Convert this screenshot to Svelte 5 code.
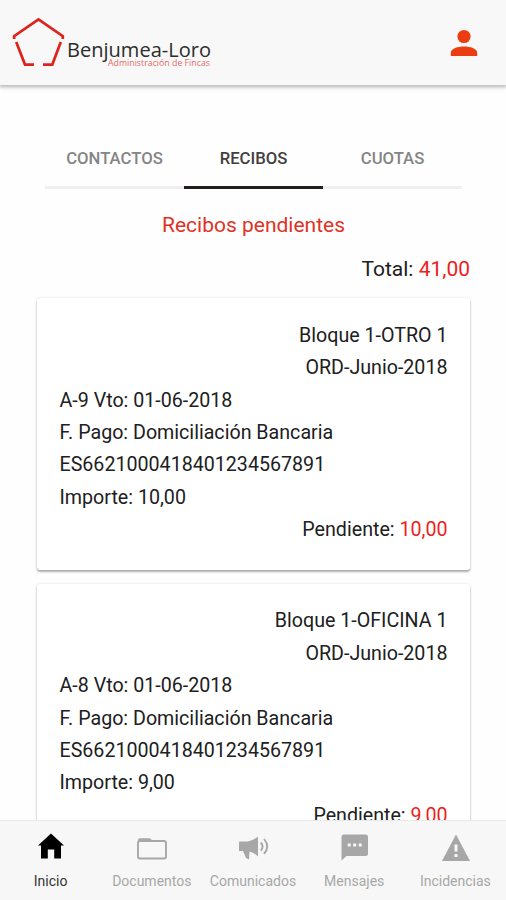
<script>
  const tabs = ['CONTACTOS', 'RECIBOS', 'CUOTAS'];
  const receipts = [
    { unit: 'Bloque 1-OTRO 1', period: 'ORD-Junio-2018', ref: 'A-9', due: '01-06-2018', amount: '10,00' },
    { unit: 'Bloque 1-OFICINA 1', period: 'ORD-Junio-2018', ref: 'A-8', due: '01-06-2018', amount: '9,00' }
  ];
  const nav = [
    { id: 'home', label: 'Inicio' },
    { id: 'folder', label: 'Documentos' },
    { id: 'horn', label: 'Comunicados' },
    { id: 'chat', label: 'Mensajes' },
    { id: 'warning', label: 'Incidencias' }
  ];
  let active = $state('RECIBOS');
</script>

<div class="app">
  <header>
    <svg class="logo" width="205" height="54" viewBox="10 16 205 54">
      <g fill="none" stroke="#e0221c" stroke-width="2.7">
        <path d="M14.1 39V36.2L38.5 19.5L62.8 36.2V39" />
        <path d="M16.2 42L25 64.6H34" />
        <path d="M60.8 42L52.3 64.6H43" />
      </g>
      <text class="brand" x="67" y="57" textLength="144" lengthAdjust="spacingAndGlyphs">Benjumea-Loro</text>
      <text class="sub" x="108" y="66.3" textLength="102" lengthAdjust="spacingAndGlyphs">Administración de Fincas</text>
    </svg>
    <svg class="user" width="28" height="28" viewBox="0 0 28 28" fill="#ec3c12">
      <circle cx="14" cy="7.5" r="6.6" />
      <path d="M.8 27v-3.4c0-4.2 7-6.2 13.2-6.2s13.2 2 13.2 6.2V27z" />
    </svg>
  </header>

  <main>
    <div class="tabs">
      {#each tabs as tab}
        <button class:active={active === tab} onclick={() => (active = tab)}>{tab}</button>
      {/each}
    </div>
    <h1>Recibos pendientes</h1>
    <p class="total">Total: <b>41,00</b></p>
    {#each receipts as r}
      <article>
        <p class="right">{r.unit}</p>
        <p class="right">{r.period}</p>
        <p>{r.ref} Vto: {r.due}</p>
        <p>F. Pago: Domiciliación Bancaria</p>
        <p>ES6621000418401234567891</p>
        <p>Importe: {r.amount}</p>
        <p class="right">Pendiente: <b>{r.amount}</b></p>
      </article>
    {/each}
  </main>

  <nav>
    {#each nav as item, i}
      <div class="item" class:current={i === 0}>
        <svg width="34" height="30" viewBox="0 0 34 30" fill="currentColor">
          {#if item.id === 'home'}
            <path d="M17 2.5L30 14.4H27V27.5H20.2V18.5H13.8V27.5H7V14.4H4z" />
          {:else if item.id === 'folder'}
            <path d="M3 11V9.2q0-2 2-2h9q1.5 0 2.3 1.3L17.500 11z" />
            <rect x="3" y="10" width="28" height="17.5" rx="2" fill="none" stroke="currentColor" stroke-width="1.9" />
          {:else if item.id === 'horn'}
            <path d="M22 5.500V25.500Q18 21.500 13.500 20.500L13 28.500L10 27L7 20H3V11.500Q3 10.500 4 10.500H12Q17.500 9.500 22 5.500z" />
            <path d="M24.800 11.500Q28.300 15.500 24.800 19.500M28 8Q34.500 15.500 28 22.800" fill="none" stroke="currentColor" stroke-width="1.900" />
          {:else if item.id === 'chat'}
            <path d="M6.5 3.5H28.5Q31 3.5 31 6V22.500Q31 25 28.500 25H9.500L4.500 29.500V6Q4.500 3.500 6.500 3.500z" />
            <path d="M10.700 12.500h3v3h-3zM16.200 12.500h3v3h-3zM21.700 12.500h3v3h-3z" fill="#f7f7f7" />
          {:else}
            <path d="M18 3.5L32 30H4z" />
            <path d="M16.500 13.500h3v7h-3zM16.500 23h3v3h-3z" fill="#f7f7f7" />
          {/if}
        </svg>
        <span>{item.label}</span>
      </div>
    {/each}
  </nav>
</div>

<style>
  .app {
    display: flex;
    flex-direction: column;
    width: 506px;
    height: 900px;
    overflow: hidden;
    background: #fefefe;
    color: #202020;
    font-family: Roboto, sans-serif;
  }
  header {
    position: relative;
    z-index: 1;
    flex: none;
    display: flex;
    justify-content: space-between;
    align-items: flex-start;
    box-sizing: border-box;
    height: 85px;
    padding: 16px 28px 0 10px;
    background: #f8f8f8;
    box-shadow: 0 1px 4px 1px rgba(0, 0, 0, 0.3);
  }
  .user { margin-top: 13px; }
  .brand { font: 20px "Open Sans", sans-serif; fill: #2c2c2c; }
  .sub { font: 8.5px "Open Sans", sans-serif; fill: #e76b68; }
  main {
    flex: 1;
    min-height: 0;
    overflow: hidden;
    padding: 44px 36px 0 37px;
  }
  .tabs { display: flex; margin: 0 8px; }
  button {
    flex: 1;
    height: 60px;
    padding: 2px 0 0;
    border: 0;
    border-bottom: 3px solid #efefef;
    background: none;
    font: 500 16.7px/55px Roboto, sans-serif;
    color: #858585;
  }
  button.active { color: #443f3f; border-color: #251c1c; }
  h1 {
    margin: 20px 0 0;
    font-size: 21px;
    line-height: 32px;
    font-weight: 400;
    text-align: center;
    color: #e03225;
  }
  p { margin: 0; line-height: 32.36px; }
  b { font-weight: 400; color: #ee2020; }
  .total { margin-top: 12px; font-size: 21px; text-align: right; }
  article {
    box-sizing: border-box;
    height: 272px;
    margin: 13px 0 13.5px;
    padding: 21.600px 22.500px 0 22.500px;
    border-radius: 3px;
    background: #fff;
    box-shadow: 0 2px 2px rgba(0, 0, 0, 0.3), 0 0 3px rgba(0, 0, 0, 0.12);
    font-size: 19.65px;
  }
  .right { text-align: right; }
  nav {
    flex: none;
    display: flex;
    box-sizing: border-box;
    height: 80px;
    border-top: 1px solid #e9e9e9;
    background: #f7f7f7;
  }
  .item {
    flex: 1;
    display: flex;
    flex-direction: column;
    align-items: center;
    padding-top: 10px;
    color: #a7a7a7;
  }
  .item span { margin-top: 11px; font-size: 14px; line-height: 18px; }
  .current { color: #000; }
  .current span { color: #333; }
</style>
